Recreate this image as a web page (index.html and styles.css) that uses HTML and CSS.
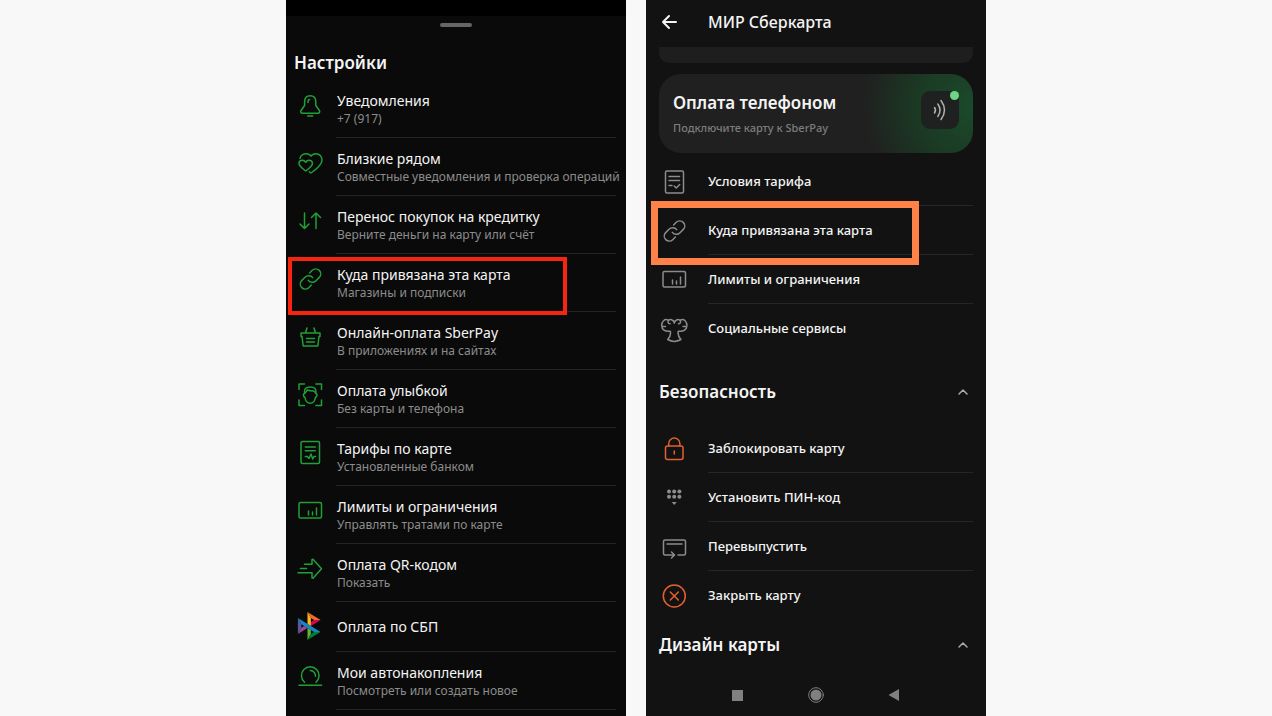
FILE: index.html
```
<!DOCTYPE html>
<html lang="ru">
<head>
    <meta charset="UTF-8">
    <meta name="viewport" content="width=device-width, initial-scale=1.0">
    <title>Настройки карты</title>
    <link rel="stylesheet" href="styles.css">
</head>
<body>
    <!-- общие иконки -->
    <svg class="sprite" aria-hidden="true">
        <symbol id="link" viewBox="0 0 28 28">
            <path d="M12.300 14.400a5 5 0 0 0 7.700.300l3.300-3.300a5 5 0 0 0-7.070-7.070l-2.600 2.600M16.700 11.600a5 5 0 0 0-7.700-.300l-3.300 3.300a5 5 0 0 0 7.070 7.070l2.600-2.600"/>
        </symbol>
        <symbol id="limits" viewBox="0 0 28 28">
            <rect x="3" y="4.5" width="22.5" height="15.5" rx="1.5"/>
            <path d="M12.5 17v-4M16.5 17v-3M20.5 17v-7"/>
        </symbol>
        <symbol id="chevron" viewBox="0 0 12 12">
            <path d="M2 8l4-4 4 4"/>
        </symbol>
    </svg>

    <main class="phones">
        <section class="phone phone-settings">
            <div class="status-bar"></div>
            <div class="handle"></div>
            <h1>Настройки</h1>
            <ul class="list">
                <li><a class="row" href="#">
                    <svg class="icon" viewBox="0 0 28 28"><path d="M8.6 10c0-4 2-6.2 5.6-6.2s5.6 2.2 5.6 6.2v3.5l3.6 5c.8 1.3 0 2.7-1.4 2.7H6.4c-1.4 0-2.2-1.4-1.4-2.7l3.6-5zM12 10.5V9.2c0-1 .7-1.7 1.7-1.7M11.7 24h5"/></svg>
                    <span class="text"><span class="title">Уведомления</span><span class="sub">+7 (917)</span></span>
                </a></li>
                <li><a class="row" href="#">
                    <svg class="icon" viewBox="0 0 28 28"><path d="M4 8.500C4.500 5.500 7.500 3.700 10.200 3.700c2 0 3.800.9 4.800 2.500 1-1.600 3-2.500 5-2.500 3.300 0 6 2.700 6 6.300 0 4.500-4.500 8.500-11 13l-1.700-1.200"/><path d="M9.700 21C5.500 18 3 16 3 13.600c0-2 1.600-3.300 3.400-3.300 1.400 0 2.600.7 3.300 2 .7-1.300 1.900-2 3.300-2 1.800 0 3.400 1.300 3.400 3.300 0 2.400-2.500 4.400-6.700 7.400z"/></svg>
                    <span class="text"><span class="title">Близкие рядом</span><span class="sub">Совместные уведомления и проверка операций</span></span>
                </a></li>
                <li><a class="row" href="#">
                    <svg class="icon" viewBox="0 0 28 28"><path d="M8.500 5v15.500M4 16l4.500 4.500L13 16M20 20.500V5M15.500 9.500L20 5l4.500 4.500"/></svg>
                    <span class="text"><span class="title">Перенос покупок на кредитку</span><span class="sub">Верните деньги на карту или счёт</span></span>
                </a></li>
                <li><a class="row marked marked-red" href="#">
                    <svg class="icon"><use href="#link"/></svg>
                    <span class="text"><span class="title">Куда привязана эта карта</span><span class="sub">Магазины и подписки</span></span>
                </a></li>
                <li><a class="row" href="#">
                    <svg class="icon" viewBox="0 0 28 28"><path d="M5 9h19v3.500h-1L21.800 22H7.200L6 12.500H5zM9.500 9L11 4M19.500 9L18 4M10.500 14.500h8M10.500 18h8"/></svg>
                    <span class="text"><span class="title">Онлайн-оплата SberPay</span><span class="sub">В приложениях и на сайтах</span></span>
                </a></li>
                <li><a class="row" href="#">
                    <svg class="icon" viewBox="0 0 28 28"><path d="M3 7.500V2h5.500M20 2h5.500v5.500M25.500 18v5.500H20M8.500 23.500H3V18"/><path d="M8.600 11.500c-1.500 0-1.800 3 .4 4 .5 3.500 2.500 5.800 5.200 5.800s4.700-2.300 5.200-5.800c2.200-1 1.900-4 .4-4M8.600 11.500C7.500 7 10 5 14.200 5s6.800 2 5.600 6.500c-.8-1.300-1.300-2-2-2.500-3 0-5-.3-6.500-1.200-.5 1.700-1.500 2.500-2.700 3.700"/></svg>
                    <span class="text"><span class="title">Оплата улыбкой</span><span class="sub">Без карты и телефона</span></span>
                </a></li>
                <li><a class="row" href="#">
                    <svg class="icon" viewBox="0 0 28 28"><rect x="5" y="1.500" width="18.500" height="22" rx="1.500"/><path d="M9.300 7h10M9.300 10.700h10M9.300 16.500h2l1.700 2 2-4.500 1.700 5 1.300-2.500h1.500"/></svg>
                    <span class="text"><span class="title">Тарифы по карте</span><span class="sub">Установленные банком</span></span>
                </a></li>
                <li><a class="row" href="#">
                    <svg class="icon"><use href="#limits"/></svg>
                    <span class="text"><span class="title">Лимиты и ограничения</span><span class="sub">Управлять тратами по карте</span></span>
                </a></li>
                <li><a class="row" href="#">
                    <svg class="icon" viewBox="0 0 28 28"><path d="M8.500 8.300H16V3.500l1-.3 8.500 9.500-8.500 9.500-1-.3v-5.200H2M4.500 12.500h6"/></svg>
                    <span class="text"><span class="title">Оплата QR-кодом</span><span class="sub">Показать</span></span>
                </a></li>
                <li><a class="row row-single" href="#">
                    <svg class="icon icon-sbp" viewBox="-8 0 120 120">
                        <path fill="#5b57a2" d="M0 26.120l14.532 25.975v15.844L.017 93.863z"/>
                        <path fill="#d90751" d="M55.797 42.643l13.617-8.346 27.868-.026-41.485 25.414z"/>
                        <path fill="#fab718" d="M55.720 25.967l.077 34.390-14.566-8.950V0z"/>
                        <path fill="#ed6f26" d="M97.282 34.271l-27.869.026-13.693-8.330L41.231 0z"/>
                        <path fill="#63b22f" d="M55.797 94.007V77.322l-14.566-8.780.008 51.458z"/>
                        <path fill="#1487c9" d="M69.380 85.737L14.531 52.095 0 26.120l97.223 59.583z"/>
                        <path fill="#017f36" d="M41.240 120l14.556-25.993 13.583-8.270 27.843-.034z"/>
                        <path fill="#984995" d="M.017 93.863l41.333-25.320-13.896-8.526-12.922 7.922z"/>
                    </svg>
                    <span class="text"><span class="title">Оплата по СБП</span></span>
                </a></li>
                <li><a class="row" href="#">
                    <svg class="icon" viewBox="0 0 28 28"><path d="M3 21.300h22.500M8.500 18.300a8.800 8.800 0 1 1 11.500 0M14.300 6.500a5.500 5.500 0 0 1 5.200 5.700"/></svg>
                    <span class="text"><span class="title">Мои автонакопления</span><span class="sub">Посмотреть или создать новое</span></span>
                </a></li>
            </ul>
        </section>

        <section class="phone phone-card">
            <header class="top">
                <button class="back" type="button" aria-label="Назад">
                    <svg viewBox="0 0 16 16"><path d="M8 2L2 8l6 6M2 8h13"/></svg>
                </button>
                <h2>МИР Сберкарта</h2>
            </header>
            <div class="card-end"></div>
            <a class="pay" href="#">
                <span class="pay-text">
                    <span class="pay-title">Оплата телефоном</span>
                    <span class="pay-sub">Подключите карту к SberPay</span>
                </span>
                <span class="pay-tile">
                    <svg viewBox="0 0 38 38"><path d="M13.500 16.500q2 2.500 0 5.500M16.800 13q4.500 6 0 12.500M20 9.500q7 9.500 0 19"/></svg>
                </span>
            </a>
            <ul class="list">
                <li><a class="row" href="#">
                    <svg class="icon" viewBox="0 0 28 28"><rect x="5.500" y="3" width="18" height="22" rx="1.500"/><path d="M9 8.500h10.500M9 12.500h10.500M9 17.500h3M14.300 18l2 2 3.400-3.500"/></svg>
                    <span class="title">Условия тарифа</span>
                </a></li>
                <li><a class="row marked marked-orange" href="#">
                    <svg class="icon"><use href="#link" y="1"/></svg>
                    <span class="title">Куда привязана эта карта</span>
                </a></li>
                <li><a class="row" href="#">
                    <svg class="icon"><use href="#limits" y="1"/></svg>
                    <span class="title">Лимиты и ограничения</span>
                </a></li>
                <li><a class="row" href="#">
                    <svg class="icon" viewBox="0 0 28 28"><path d="M14.300 8c-.6-3.500-4.800-4.500-6-2-.6 1.400.2 2.800 1.800 2.800M14.300 8c.6-3.500 4.800-4.500 6-2 .6 1.400-.2 2.800-1.800 2.800M8 5C4.500 3.500 1.700 6.500 1.700 10.500c0 4 3.300 6.500 8.600 5.700.7 3-.1 5.600-2.600 8.300 4 2.300 9.200 2.300 13.200 0-2.500-2.700-3.300-5.300-2.600-8.300 5.300.8 8.600-1.700 8.600-5.700 0-4-2.800-7-6.300-5.500M2 11.500h3.500M23 11.500h3.500"/></svg>
                    <span class="title">Социальные сервисы</span>
                </a></li>
            </ul>

            <h2><button class="group" type="button">Безопасность <svg><use href="#chevron"/></svg></button></h2>
            <ul class="list">
                <li><a class="row" href="#">
                    <svg class="icon icon-alert" viewBox="0 0 28 28"><rect x="5.500" y="11" width="17.500" height="13.500" rx="2"/><path d="M8.700 11V8.700a5.600 5.600 0 0 1 11.200 0V11M14.300 16v3"/></svg>
                    <span class="title">Заблокировать карту</span>
                </a></li>
                <li><a class="row" href="#">
                    <svg class="icon icon-keys" viewBox="0 0 28 28"><circle cx="9" cy="7.500" r="2"/><circle cx="14.200" cy="7.500" r="2"/><circle cx="19.400" cy="7.500" r="2"/><circle cx="9" cy="12.700" r="2"/><circle cx="14.200" cy="12.700" r="2"/><circle cx="19.400" cy="12.700" r="2"/><path d="M11.700 18h5l-2.500 3z"/></svg>
                    <span class="title">Установить ПИН-код</span>
                </a></li>
                <li><a class="row" href="#">
                    <svg class="icon" viewBox="0 0 28 28"><path d="M18 22h6a1.500 1.500 0 0 0 1.500-1.500v-12A1.500 1.500 0 0 0 24 7H5a1.500 1.500 0 0 0-1.500 1.500v12A1.500 1.500 0 0 0 5 22h9M11.500 19l3 3-3 3M7 11h15"/></svg>
                    <span class="title">Перевыпустить</span>
                </a></li>
                <li><a class="row" href="#">
                    <svg class="icon icon-alert" viewBox="0 0 28 28"><circle cx="14.300" cy="14" r="11"/><path d="M10.300 10l8 8M18.300 10l-8 8"/></svg>
                    <span class="title">Закрыть карту</span>
                </a></li>
            </ul>

            <h2><button class="group group-last" type="button">Дизайн карты <svg><use href="#chevron"/></svg></button></h2>
            <nav class="system">
                <button type="button" aria-label="Недавние"><svg viewBox="0 0 16 16"><path d="M2 3h11v11H2z"/></svg></button>
                <button type="button" aria-label="Домой"><svg viewBox="0 0 16 16"><circle cx="8" cy="8" r="5.500"/><circle class="ring" cx="8" cy="8" r="7.300"/></svg></button>
                <button type="button" aria-label="Назад"><svg viewBox="0 0 16 16"><path d="M13 2v12L2.500 8z"/></svg></button>
            </nav>
        </section>
    </main>
</body>
</html>
```
FILE: styles.css
```
* {
    box-sizing: border-box;
}

body {
    margin: 0;
    background-color: #f8f8f8;
    color: #f4f4f4;
    font-family: "Noto Sans", "Open Sans", sans-serif;
    font-size: 13px;
}

h1, h2, ul {
    margin: 0;
    padding: 0;
}

button {
    padding: 0;
    border: none;
    background: none;
    color: inherit;
    font: inherit;
    cursor: pointer;
}

svg {
    display: block;
    fill: none;
    stroke: currentColor;
    stroke-width: 1.5;
    stroke-linecap: round;
    stroke-linejoin: round;
}

.sprite {
    display: none;
}

.phones {
    display: flex;
    justify-content: center;
    gap: 20px;
    min-height: 100vh;
}

.phone {
    flex: 0 1 340px;
    min-width: 0;
}

.list {
    list-style: none;
}

.row {
    display: flex;
    position: relative;
    color: inherit;
    text-decoration: none;
}

.icon {
    flex: none;
    width: 28px;
    height: 28px;
}

/* рамка поверх строки */
.marked::before {
    content: "";
    position: absolute;
    z-index: 1;
}

.marked-red::before {
    top: 3px;
    right: 59px;
    bottom: -3px;
    left: 2px;
    border: 4px solid #f52510;
}

.marked-orange::before {
    top: -5px;
    right: 67px;
    bottom: -10px;
    left: 5px;
    border: 7px solid #ff8248;
}

/* левый экран */
.phone-settings {
    background-color: #0a0a0a;
}

.status-bar {
    height: 16px;
    background-color: #000;
}

.handle {
    width: 32px;
    height: 4px;
    margin: 7px auto 0;
    border-radius: 2px;
    background-color: #666;
}

.phone-settings h1 {
    padding: 24px 8px 5px;
    font-size: 17px;
    line-height: 24px;
    font-weight: 600;
}

.phone-settings .row {
    gap: 12px;
    padding: 0 10px;
}

.phone-settings .icon {
    margin-top: 12px;
    color: #21a038;
}

.phone-settings .icon-sbp {
    margin-top: 10px;
    stroke: none;
}

.text {
    flex: 1;
    min-width: 0;
    padding: 11px 0 9px 1px;
    border-bottom: 1px solid #242424;
    white-space: nowrap;
}

.text .title,
.text .sub {
    display: block;
}

.text .title {
    font-size: 14px;
    line-height: 19px;
}

.sub {
    color: #8c8c8c;
    font-size: 12px;
    line-height: 18px;
}

.row-single .text {
    padding: 15px 0 15px 1px;
}

/* правый экран */
.phone-card {
    display: flex;
    flex-direction: column;
    background-color: #121212;
}

.top {
    display: flex;
    align-items: center;
    gap: 31px;
    height: 47px;
    padding: 0 15px 3px;
}

.top h2 {
    font-size: 16px;
    line-height: 20px;
    font-weight: 500;
}

.back svg {
    width: 16px;
    height: 16px;
    stroke-width: 2;
}

.card-end {
    height: 16px;
    margin: 0 13px;
    border-radius: 0 0 10px 10px;
    background-color: #1e1e1e;
}

.pay {
    display: flex;
    justify-content: space-between;
    margin: 11px 13px 4px;
    padding: 17px 14px;
    border-radius: 22px;
    background: radial-gradient(circle at 100% 40%, #1b4a2b 0, #1b3a24 55px, #202020 110px);
    color: inherit;
    text-decoration: none;
}

.pay-text {
    display: flex;
    flex-direction: column;
    gap: 4px;
}

.pay-title {
    font-size: 17px;
    line-height: 24px;
    font-weight: 600;
}

.pay-sub {
    color: #7d7d7d;
    font-size: 11px;
    line-height: 17px;
    font-weight: 500;
}

.pay-tile {
    position: relative;
    width: 38px;
    height: 38px;
    border-radius: 9px;
    background-color: #1f2120;
    color: #b0b0b0;
}

.pay-tile::after {
    content: "";
    position: absolute;
    top: 0;
    right: 0;
    width: 9px;
    height: 9px;
    border-radius: 50%;
    background-color: #6fd583;
}

.phone-card .row {
    align-items: center;
    gap: 20px;
    height: 49px;
    padding: 0 13px 0 14px;
}

.phone-card .row .title {
    flex: 1;
    line-height: 48px;
    font-weight: 500;
    border-bottom: 1px solid #262626;
}

.phone-card li:last-child .title {
    border-bottom-color: transparent;
}

.phone-card .icon {
    color: #8c8c8c;
}

.phone-card .icon-alert {
    color: #e3602f;
}

.icon-keys {
    fill: currentColor;
    stroke: none;
}

.group {
    display: flex;
    align-items: center;
    justify-content: space-between;
    width: 100%;
    padding: 27px 17px 20px 13px;
    font-size: 17px;
    line-height: 24px;
    font-weight: 600;
}

.group-last {
    padding-top: 13px;
}

.group svg {
    width: 12px;
    height: 12px;
    color: #aaa;
}

.system {
    display: flex;
    justify-content: center;
    gap: 62px;
    padding: 10px 0 13px;
}

.system svg {
    width: 16px;
    height: 16px;
    fill: #808080;
    stroke: none;
}

.system .ring {
    fill: none;
    stroke: #808080;
    stroke-width: 1;
}
```
